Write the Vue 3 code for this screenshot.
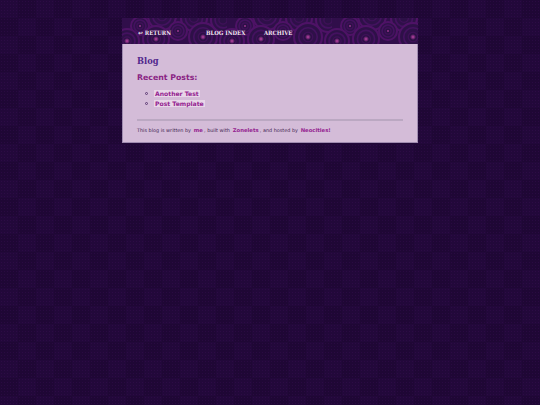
<template>
  <div class="page">
    <div class="container">
      <header class="header">
        <!-- swirl pattern behind the nav, one tile repeated -->
        <svg class="swirls" width="296" height="26" viewBox="0 0 296 26">
          <defs>
            <radialGradient id="spot">
              <stop offset="0" stop-color="#c04aa8" />
              <stop offset="0.5" stop-color="#a83a98" stop-opacity="0.6" />
              <stop offset="1" stop-color="#a83a98" stop-opacity="0" />
            </radialGradient>
            <pattern id="tile" width="105" height="26" patternUnits="userSpaceOnUse">
              <rect width="105" height="26" fill="#300e4a" />
              <g v-for="s in swirls" :key="s.x + '-' + s.y">
                <circle :cx="s.x" :cy="s.y" :r="s.r" fill="#2e1048" stroke="#4e1266" stroke-width="2" />
                <circle :cx="s.x" :cy="s.y" :r="s.r * 0.66" fill="#2f1049" stroke="#441160" stroke-width="1.6" />
                <circle :cx="s.x" :cy="s.y" :r="s.r * 0.34" fill="#2c1046" stroke="#3f1059" stroke-width="1.2" />
                <circle v-if="s.spot" :cx="s.x" :cy="s.y" :r="s.spot" fill="url(#spot)" />
              </g>
            </pattern>
          </defs>
          <rect width="296" height="26" fill="url(#tile)" />
        </svg>
        <nav class="nav">
          <a class="nav-link return"><span class="arrow">↩</span> RETURN</a>
          <a class="nav-link index">BLOG INDEX</a>
          <a class="nav-link">ARCHIVE</a>
        </nav>
      </header>
      <main class="content">
        <h1 class="title">Blog</h1>
        <h2 class="subtitle">Recent Posts:</h2>
        <ul class="posts">
          <li v-for="post in posts" :key="post"><a class="post-link">{{ post }}</a></li>
        </ul>
        <hr class="divider" />
        <p class="footer">
          This blog is written by <a class="foot-link">me</a>, built with <a class="foot-link">Zonelets</a>, and hosted by <a class="foot-link">Neocities!</a>
        </p>
      </main>
    </div>
  </div>
</template>

<script setup>
const posts = ['Another Test', 'Post Template']

// circles of one header tile, spot is the radius of the pink glow
const swirls = [
  { x: 40, y: -2, r: 14, spot: 0 },
  { x: 72, y: 0, r: 13, spot: 0 },
  { x: 101, y: 2, r: 12, spot: 0 },
  { x: 18, y: 8, r: 9, spot: 1.5 },
  { x: 56, y: 13, r: 9, spot: 1.5 },
  { x: 5, y: 23, r: 12, spot: 3 },
  { x: 110, y: 23, r: 12, spot: 3 },
  { x: 34, y: 21, r: 13, spot: 3 },
  { x: 81, y: 19, r: 14, spot: 3 }
]
</script>

<style scoped>
.page {
  min-height: 405px;
  padding-top: 18px;
  box-sizing: border-box;
}

.container {
  width: 296px;
  margin: 0 auto;
}

.header {
  position: relative;
  height: 26px;
  overflow: hidden;
}

.swirls {
  position: absolute;
  left: 0;
  top: 0;
}

.nav {
  position: relative;
  display: flex;
  align-items: center;
  height: 28px;
  padding-left: 16px;
  font-family: "DejaVu Serif Condensed", "DejaVu Serif", serif;
  font-stretch: condensed;
  font-size: 5.9px;
  font-weight: bold;
  color: #efe4ef;
}

.arrow {
  font-family: "DejaVu Sans", sans-serif;
  font-stretch: normal;
}

.return {
  width: 68px;
}

.index {
  width: 58px;
}

.content {
  height: 99px;
  padding: 10px 14px 0;
  box-sizing: border-box;
  background-color: #d4bcd8;
  border-right: 1px solid #a08cb0;
  border-bottom: 1px solid #a08cb0;
  border-left: 1px solid #a08cb0;
  font-family: "DejaVu Sans", sans-serif;
}

.title {
  margin: 0;
  font-family: "DejaVu Serif Condensed", "DejaVu Serif", serif;
  font-stretch: condensed;
  font-size: 9.2px;
  font-weight: bold;
  color: #52278c;
  line-height: 14px;
}

.subtitle {
  margin: 4px 0 0;
  font-size: 7.8px;
  font-weight: bold;
  color: #8a2484;
  line-height: 12px;
}

.posts {
  margin: 5px 0 0;
  padding-left: 17px;
  list-style: none;
  font-size: 6.1px;
  color: #4a2a6a;
}

.posts li {
  position: relative;
  line-height: 9.5px;
}

/* hollow bullet, the default one is too small at this size */
.posts li::before {
  content: "";
  position: absolute;
  left: -9px;
  top: 3px;
  width: 3px;
  height: 3px;
  border: 0.7px solid #5c3a74;
  border-radius: 50%;
  box-sizing: border-box;
}

.post-link {
  padding: 0 1px;
  background-color: #e8d6e8;
  font-weight: bold;
  color: #942290;
}

.divider {
  height: 2px;
  margin: 11px 0 0;
  border: none;
  background-color: #bba8c2;
}

.footer {
  margin: 5px 0 0;
  font-size: 4.9px;
  line-height: 9px;
  color: #3e2450;
}

.foot-link {
  margin: 0 1.2px;
  font-size: 5.3px;
  font-weight: bold;
  color: #942290;
}
</style>

<style>
body {
  background-color: #22083a;
  background-image:
    radial-gradient(circle at center, rgba(80, 24, 110, 0.22) 0.6px, transparent 1px),
    linear-gradient(45deg, rgba(0, 0, 0, 0.08) 25%, transparent 25%, transparent 75%, rgba(0, 0, 0, 0.08) 75%),
    linear-gradient(45deg, rgba(0, 0, 0, 0.08) 25%, transparent 25%, transparent 75%, rgba(0, 0, 0, 0.08) 75%);
  background-size: 3px 3px, 36px 36px, 36px 36px;
  background-position: 0 0, 0 0, 18px 18px;
}
</style>
